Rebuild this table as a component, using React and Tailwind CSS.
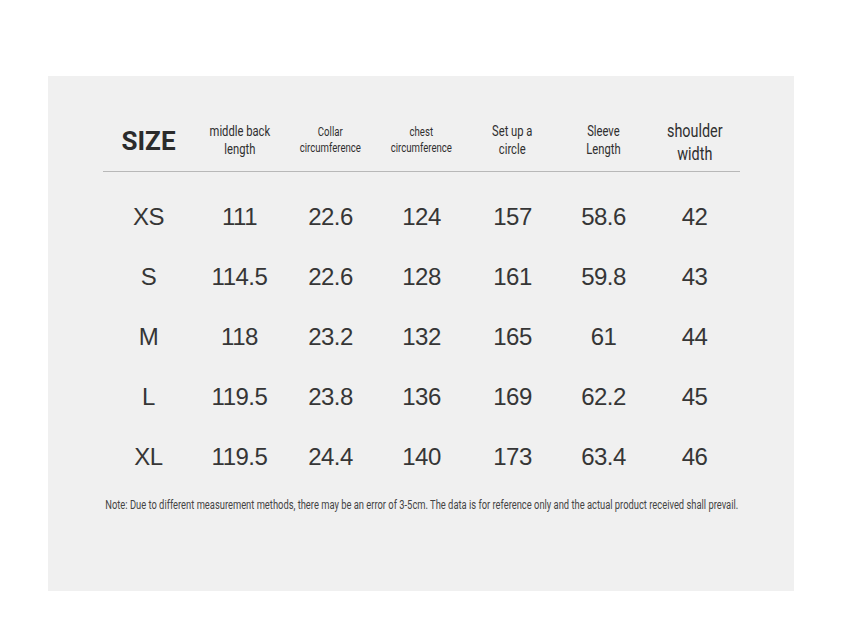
import React from "react";

const roboto = { fontFamily: 'Roboto, "Liberation Sans", sans-serif' };

const headers = [
  { lines: ["middle back", "length"], cls: "text-[14px] leading-[18px]" },
  { lines: ["Collar", "circumference"], cls: "text-[12px] leading-[16px]" },
  { lines: ["chest", "circumference"], cls: "text-[12px] leading-[16px]" },
  { lines: ["Set up a", "circle"], cls: "text-[14px] leading-[18px]" },
  { lines: ["Sleeve", "Length"], cls: "text-[14px] leading-[18px]" },
  { lines: ["shoulder", "width"], cls: "text-[18px] leading-[23px] pt-[4px]" },
];

const rows = [
  ["XS", "111", "22.6", "124", "157", "58.6", "42"],
  ["S", "114.5", "22.6", "128", "161", "59.8", "43"],
  ["M", "118", "23.2", "132", "165", "61", "44"],
  ["L", "119.5", "23.8", "136", "169", "62.2", "45"],
  ["XL", "119.5", "24.4", "140", "173", "63.4", "46"],
];

export default function App() {
  return (
    <div className="w-[842px] h-[632px] bg-white pt-[76px] pl-[48px]">
      <div className="w-[746px] h-[515px] bg-[#f0f0f0] pt-[39px] pl-[55px]">
        <div className="w-[637px]">
          <div className="grid grid-cols-[repeat(7,91px)] h-[57px] pb-[8px] items-center border-b border-[#b8b8b8] text-[#2f2f2f]">
            <div className="text-center text-[26px] font-bold pt-[2px] text-[#2b2b2b]" style={roboto}>SIZE</div>
            {headers.map((h, i) => (
              <div key={i} className="flex justify-center">
                <div className={"text-center whitespace-nowrap scale-x-[0.8] " + h.cls} style={roboto}>
                  {h.lines.map((l, j) => <div key={j}>{l}</div>)}
                </div>
              </div>
            ))}
          </div>
          <div className="pt-[15px]">
            {rows.map((r, i) => (
              <div key={i} className="grid grid-cols-[repeat(7,91px)] h-[60px] items-center text-[24px] tracking-[-0.5px] text-[#363636]" style={{ fontFamily: '"Liberation Sans", Arial, sans-serif' }}>
                {r.map((c, j) => <div key={j} className="text-center">{c}</div>)}
              </div>
            ))}
          </div>
          <div className="mt-[11px] flex justify-center">
            <div className="text-[12px] leading-[14px] text-[#444] whitespace-nowrap scale-x-[0.78]" style={roboto}>
              Note: Due to different measurement methods, there may be an error of 3-5cm. The data is for reference only and the actual product received shall prevail.
            </div>
          </div>
        </div>
      </div>
    </div>
  );
}
